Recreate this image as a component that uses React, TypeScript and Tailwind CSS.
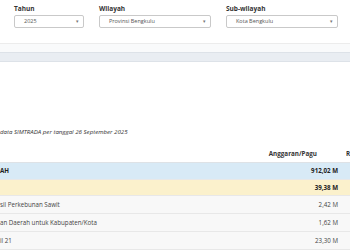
const filters = [
  { label: 'Tahun', value: '2025', width: 'w-[70px]' },
  { label: 'Wilayah', value: 'Provinsi Bengkulu', width: 'w-[112px]' },
  { label: 'Sub-wilayah', value: 'Kota Bengkulu', width: 'w-[112px]' },
];

const rows = [
  { name: 'AH', amount: '912,02 M', cls: 'bg-[#d8eaf6] font-bold text-[#222]' },
  { name: '', amount: '39,38 M', cls: 'bg-[#fbf1cc] font-bold text-[#222]' },
  { name: 'sil Perkebunan Sawit', amount: '2,42 M', cls: 'bg-[#f8f8f8] text-[#444]' },
  { name: 'an Daerah untuk Kabupaten/Kota', amount: '1,62 M', cls: 'bg-[#f8f8f8] text-[#444]' },
  { name: 'il 21', amount: '23,30 M', cls: 'bg-[#f8f8f8] text-[#444]' },
];

const App = () => {
  return (
    <div className="w-[350px] h-[250px] overflow-hidden bg-white font-['Open_Sans',sans-serif] text-[#333]">
      <div className="flex gap-[15px] px-[14px] pt-[4px] h-[43px]">
        {filters.map(f => (
          <div key={f.label} className="flex flex-col">
            <span className="text-[6.5px] font-bold leading-[9px] text-[#333]">{f.label}</span>
            <div className={`${f.width} mt-[2px] h-[13px] border border-[#c9c9c9] rounded-[2px] flex items-center justify-between pl-[9px] pr-[4px]`}>
              <span className="text-[5.5px] text-[#555]">{f.value}</span>
              <span className="text-[5px] leading-none text-[#777]">▾</span>
            </div>
          </div>
        ))}
      </div>
      <div className="h-[9px] border-t border-[#ececec] bg-[#f9fafb]" />
      <div className="h-[10px] bg-[#e9edf2] border-y border-[#dde2e8]" />
      <div className="h-[65px]" />
      <p className="text-[6.1px] italic text-[#333] leading-[9px]">data SIMTRADA per tanggal 26 September 2025</p>
      <div className="h-[10px]" />
      <div className="flex h-[17px] items-center border-b border-[#dee2e6] text-[6.3px] font-bold text-[#333]">
        <div className="flex-1" />
        <div className="w-[90px] text-right pr-[29px] whitespace-nowrap">Anggaran/Pagu</div>
        <div className="w-[4px] overflow-hidden">R</div>
      </div>
      {rows.map((r, i) => (
        <div key={i} className={`flex items-center border-b border-[#e8e8e8] text-[6.2px] ${r.cls} ${i < 2 ? 'h-[16.5px]' : 'h-[18px]'}`}>
          <div className="flex-1 whitespace-nowrap overflow-hidden">{r.name}</div>
          <div className="w-[80px] text-right pr-[12px]">{r.amount}</div>
        </div>
      ))}
    </div>
  );
};

export default App;
